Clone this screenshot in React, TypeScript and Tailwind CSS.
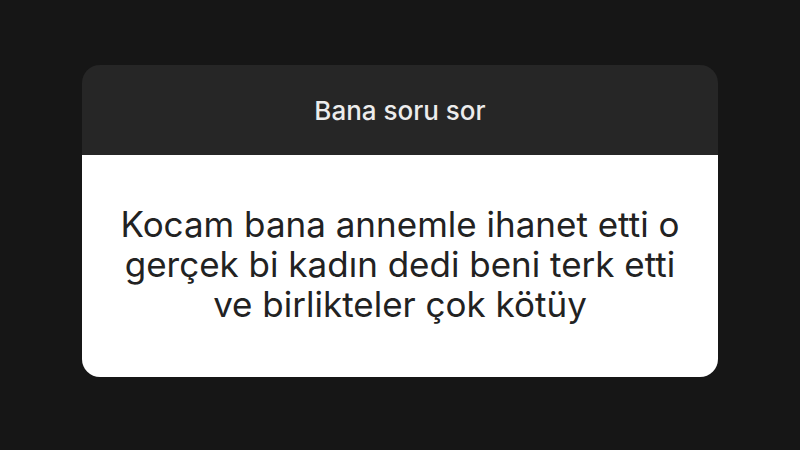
export default function App() {
  return (
    <div className="w-[800px] h-[450px] bg-[#161616] flex items-start pt-[65px] px-[82px]" style={{ fontFamily: "Inter, 'Noto Sans', sans-serif" }}>
      <div className="w-[636px] h-[312px] rounded-[18px] overflow-hidden flex flex-col">
        <div className="h-[90px] bg-[#262626] flex items-center justify-center">
          <span className="text-[26px] text-[#ececec] font-medium tracking-[0px]">Bana soru sor</span>
        </div>
        <div className="flex-1 bg-white flex items-center justify-center pb-[4px]">
          <p className="text-center text-[35px] leading-[40px] text-[#222222] tracking-[0px]">
            Kocam bana annemle ihanet etti o<br />gerçek bi kadın dedi beni terk etti<br />ve birlikteler çok kötüy
          </p>
        </div>
      </div>
    </div>
  );
}
